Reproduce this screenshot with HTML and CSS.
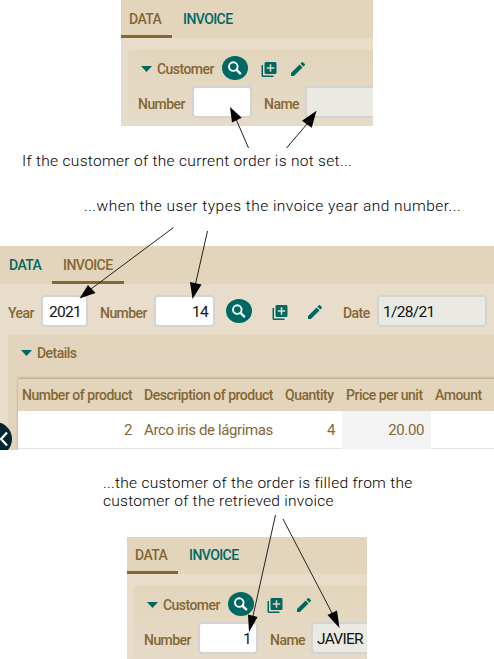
FILE: index.html
```html
<!DOCTYPE html>
<html lang="en">
<head>
<meta charset="utf-8">
<title>Customer and invoice</title>
<link rel="stylesheet" href="styles.css">
</head>
<body>
<svg class="defs" width="0" height="0" aria-hidden="true">
  <symbol id="search" viewBox="0 0 26 24"><ellipse cx="13" cy="12" rx="13" ry="12" fill="#006863"/><circle cx="11.3" cy="10.600" r="4.300" fill="none" stroke="#fff" stroke-width="1.900"/><path d="M14.300 13.600 18.800 18.100" stroke="#fff" stroke-width="2.300"/></symbol>
  <symbol id="add" viewBox="2 2 20 20"><path fill="#006863" d="M4 6H2v14c0 1.100.9 2 2 2h14v-2H4V6zm16-4H8c-1.100 0-2 .9-2 2v12c0 1.100.9 2 2 2h12c1.100 0 2-.9 2-2V4c0-1.100-.9-2-2-2zm-1 9h-4v4h-2v-4H9V9h4V5h2v4h4v2z"/></symbol>
  <symbol id="pencil" viewBox="3 3 18 18"><path fill="#006863" d="M3 17.250V21h3.750L17.810 9.940l-3.750-3.750L3 17.250zM20.710 7.040a1 1 0 0 0 0-1.410l-2.340-2.340a1 1 0 0 0-1.410 0l-1.830 1.830 3.750 3.750 1.830-1.830z"/></symbol>
</svg>
<main class="page">
  <section class="panel customer">
    <nav class="tabs"><span class="tab active">DATA</span><span class="tab">INVOICE</span></nav>
    <div class="group">
      <div class="heading"><i class="caret"></i><span class="label title">Customer</span><svg class="search"><use href="#search"/></svg><svg class="add"><use href="#add"/></svg><svg class="pencil"><use href="#pencil"/></svg></div>
      <div class="fields"><span class="label number">Number</span><span class="input"></span><span class="label name">Name</span><span class="input readonly"></span></div>
    </div>
  </section>
  <p class="note first">If the customer of the current order is not set...</p>
  <p class="note second">...when the user types the invoice year and number...</p>
  <section class="panel invoice">
    <nav class="tabs"><span class="tab">DATA</span><span class="tab active">INVOICE</span></nav>
    <div class="key"><span class="label year">Year</span><span class="input small">2021</span><span class="label number">Number</span><span class="input medium">14</span><svg class="search"><use href="#search"/></svg><svg class="add"><use href="#add"/></svg><svg class="pencil"><use href="#pencil"/></svg><span class="label date">Date</span><span class="input readonly">1/28/21</span></div>
    <div class="details">
      <div class="heading"><i class="caret"></i><span class="label">Details</span></div>
      <div class="table">
        <div class="row head"><span>Number of product</span><span>Description of product</span><span>Quantity</span><span>Price per unit</span><span>Amount</span></div>
        <div class="row"><span class="num">2</span><span class="desc">Arco iris de lágrimas</span><span class="num">4</span><span class="num price">20.00</span><span></span></div>
      </div>
    </div>
    <svg class="back" viewBox="0 0 12 34"><circle cx="-5" cy="17" r="17" fill="#022631"/><path d="M7 10.500 1 17l6 6.500" fill="none" stroke="#fff" stroke-width="2.300"/></svg>
  </section>
  <p class="note third">...the customer of the order is filled from the<br><span>customer of the retrieved invoice</span></p>
  <section class="panel customer filled">
    <nav class="tabs"><span class="tab active">DATA</span><span class="tab">INVOICE</span></nav>
    <div class="group">
      <div class="heading"><i class="caret"></i><span class="label title">Customer</span><svg class="search"><use href="#search"/></svg><svg class="add"><use href="#add"/></svg><svg class="pencil"><use href="#pencil"/></svg></div>
      <div class="fields"><span class="label number">Number</span><span class="input">1</span><span class="label name">Name</span><span class="input readonly">JAVIER</span></div>
    </div>
  </section>
  <svg class="arrows" viewBox="0 0 494 659">
    <path d="M248.500 148 236 119M286.500 148 307 124M173.500 227.500 91 289M207.500 231 195.500 284M275.500 515 253 616M283 519 333 615"/>
    <g><path d="M230 107 232 122.500 241.700 117.700zM316.500 110.700 302 120.700 311.700 127.700zM79.500 298.500 88 285 95.500 293zM192.500 299 190 282 201.500 284.500zM249 632 248 614.500 257.500 617zM339.500 628 327.500 615 337 610.500z"/></g>
  </svg>
</main>
</body>
</html>
```
FILE: styles.css
```css
* { box-sizing: border-box; }
body { margin: 0; background: #fff; font-family: Roboto, sans-serif; }
.defs { position: absolute; }
.page { position: relative; width: 494px; height: 659px; overflow: hidden; display: flex; flex-direction: column; align-items: flex-start; }
.panel { flex: none; background: #e7ddca; overflow: hidden; }
.customer { width: 252px; height: 126px; margin-left: 121px; }
.filled { width: 240px; height: 122px; margin: 24px 0 0 127px; }
.tabs { display: flex; height: 38px; background: #e2d5bc; }
.filled .tabs { height: 37px; }
.tab { padding: 0 11px 0 8px; border-bottom: 3px solid transparent; color: #006863; font-size: 14px; line-height: 39px; font-weight: 500; letter-spacing: -.57px; white-space: nowrap; width: 51px; height: 100%; }
.filled .tab { line-height: 37px; }
.tab + .tab { width: 75px; padding-left: 11px; }
.tab.active { color: #846734; border-bottom-color: #846734; }
.group { margin: 12px 0 0 7px; height: 76px; border-radius: 3px 0 0 0; background: linear-gradient(#e2d5bc, #e6dbc8); }
.heading { display: flex; align-items: center; }
.group .heading { height: 36px; padding: 2px 0 0 13px; }
.caret { flex: none; width: 11px; height: 6px; background: #006863; clip-path: polygon(0 0, 100% 0, 50% 100%); }
.label { flex: none; color: #846734; font-size: 14px; line-height: 16px; font-weight: 500; letter-spacing: -.55px; white-space: nowrap; }
.title { width: 65px; margin-left: 5px; }
svg { flex: none; display: block; }
.search { width: 26px; height: 24px; margin-top: -2px; }
.add { width: 16px; height: 15px; margin-left: 13px; }
.pencil { width: 14px; height: 14px; margin: -1px 0 0 14px; }
.fields { display: flex; align-items: center; height: 32px; padding-left: 10px; }
.fields .number { width: 54px; padding-top: 4px; }
.fields .name { width: 41px; margin-left: 12px; padding-top: 4px; }
.input { flex: none; width: 60px; height: 32px; border: 2px solid #d3d3d3; border-radius: 4px; background: #fff; padding: 0 5px; font-size: 15.5px; line-height: 30px; letter-spacing: -.7px; text-align: right; color: #111; white-space: nowrap; }
.fields .input.readonly { width: 90px; text-align: left; padding-left: 4px; letter-spacing: -.75px; }
.input.readonly { background: #eaeae2; text-align: left; }
.note { margin: 0; height: 19px; font-weight: 300; font-size: 15.5px; line-height: 18px; color: #000; white-space: nowrap; }
.first { margin: 26px 0 0 22px; letter-spacing: .31px; }
.second { margin: 26px 0 0 84px; letter-spacing: .47px; }
.third { margin: 24px 0 0 103px; height: 39px; letter-spacing: .28px; }
.invoice { position: relative; width: 494px; height: 204px; margin-top: 30px; }
.invoice .tab { width: 52px; padding-left: 9px; }
.invoice .tab + .tab { width: 72px; padding-left: 11px; }
.key { display: flex; align-items: center; height: 50px; padding: 4px 0 0 8px; }
.key .label { padding-top: 4px; }
.year { width: 33px; }
.small { width: 47px; }
.key .number { width: 54px; margin-left: 12px; }
.medium { width: 61px; }
.key .search { margin-left: 11px; margin-top: 0; }
.key .add { margin-left: 20px; margin-top: 3px; }
.key .pencil { margin-left: 20px; margin-top: 1px; }
.date { width: 34px; margin-left: 21px; }
.key .readonly { width: 110px; padding-left: 4px; }
.details { height: 116px; margin-left: 8px; padding-left: 10px; border-radius: 3px 0 0 0; background: linear-gradient(#e2d5bc, #e2d3bd 45px); }
.details .heading { height: 44px; padding: 0 0 6px 3px; }
.details .label { margin-left: 5px; }
.table { height: 72px; background: #fff; border-top: 1px solid #bfb29c; box-shadow: 0 0 2px #a49882; }
.row { display: grid; grid-template-columns: 119px 142px 63px 89px 63px; height: 38px; border-bottom: 1px solid #e4e4e4; color: #846734; font-size: 15px; line-height: 38px; letter-spacing: -.38px; }
.row span { padding-left: 4px; white-space: nowrap; }
.row .num { padding-right: 5px; text-align: right; }
.row .num:nth-child(3) { padding-right: 7px; }
.row .price { background: #f3f3f3; padding-right: 7px; }
.row .desc { padding-left: 7px; }
.head { height: 32px; border: 0; background: #e2d5bc; font-size: 14px; line-height: 33px; font-weight: 500; letter-spacing: -.48px; }
.head span:nth-child(2) { padding-left: 7px; }
.head span:nth-child(3) { padding-left: 6px; }
.back { position: absolute; left: 0; top: 176px; width: 12px; height: 34px; }
.arrows { position: absolute; inset: 0; width: 494px; height: 659px; fill: none; stroke: #222; stroke-width: 1; }
.arrows g { fill: #000; stroke: none; }
```
